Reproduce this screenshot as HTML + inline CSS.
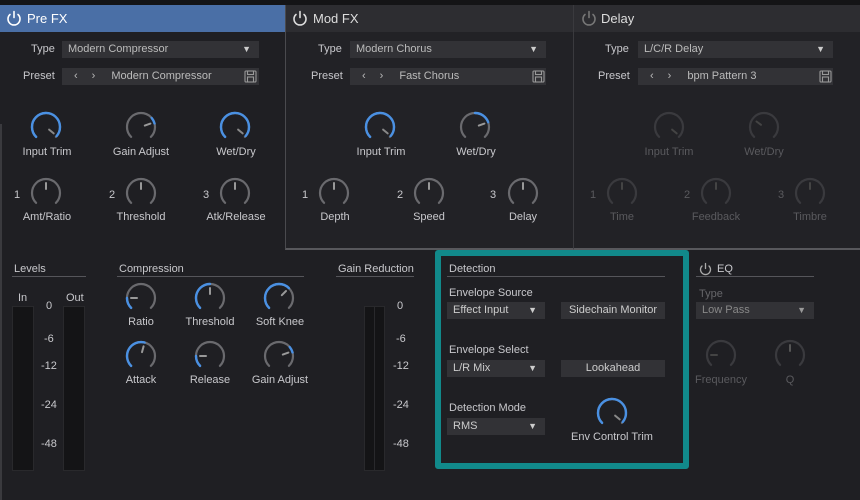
<!DOCTYPE html>
<html><head><meta charset="utf-8"><style>
*{margin:0;padding:0;box-sizing:border-box}
body{width:860px;height:500px;background:#1f1f23;position:relative;overflow:hidden;font-family:"Liberation Sans",sans-serif;font-size:11px;color:#c8c8cc}
.a{position:absolute;white-space:nowrap}
.hdr{position:absolute;top:5px;height:27px;font-size:13px;color:#ddd;padding-left:27px;line-height:27px}
.dd{position:absolute;height:17px;background:#323236;color:#bbb;line-height:17px;padding-left:6px;font-size:11px}
.dd .t{position:absolute;right:8px;top:0;font-size:9px;color:#ccc}
.lbl{position:absolute;text-align:center;width:100px;margin-left:-50px}
.sec{position:absolute;border-bottom:1px solid #55555a;height:14px;line-height:12px;padding-left:2px}
.dim{color:#5a5a5e}
.meter{position:absolute;background:#141416;border:1px solid #29292c}
.num{position:absolute;font-size:11px}
</style></head><body>
<div class="a" style="left:0;top:0;width:860px;height:5px;background:#141416"></div>
<div class="a" style="left:0;top:5px;width:285px;height:243px;background:#1f1f23"></div>
<div class="hdr" style="left:0;width:285px;background:#4a6fa6;color:#fff">Pre FX</div>
<div class="a" style="left:285px;top:5px;width:289px;height:245px;background:#222226;border:1px solid #4a4a4e;border-bottom:2px solid #58585c"></div>
<div class="hdr" style="left:286px;width:287px;background:#2d2d31">Mod FX</div>
<div class="a" style="left:573px;top:5px;width:287px;height:245px;background:#222226;border-left:1px solid #3a3a3e;border-bottom:2px solid #58585c"></div>
<div class="hdr" style="left:574px;width:286px;background:#2d2d31">Delay</div>
<div class="a" style="left:0;top:124px;width:2px;height:376px;background:#3a3a3e"></div>

<div class="a" style="left:31px;top:43px">Type</div>
<div class="dd" style="left:62px;top:41px;width:197px">Modern Compressor<span class="t">▼</span></div>
<div class="a" style="left:23px;top:70px">Preset</div>
<div class="dd" style="left:62px;top:68px;width:197px"><span style="margin-left:6px">‹</span><span style="margin-left:14px">›</span><span style="margin-left:16px">Modern Compressor</span></div>
<div class="lbl" style="left:47px;top:146px">Input Trim</div>
<div class="lbl" style="left:141px;top:146px">Gain Adjust</div>
<div class="lbl" style="left:236px;top:146px">Wet/Dry</div>
<div class="num" style="left:14px;top:189px">1</div>
<div class="num" style="left:109px;top:189px">2</div>
<div class="num" style="left:203px;top:189px">3</div>
<div class="lbl" style="left:47px;top:211px">Amt/Ratio</div>
<div class="lbl" style="left:141px;top:211px">Threshold</div>
<div class="lbl" style="left:236px;top:211px">Atk/Release</div>

<div class="a" style="left:318px;top:43px">Type</div>
<div class="dd" style="left:350px;top:41px;width:196px">Modern Chorus<span class="t">▼</span></div>
<div class="a" style="left:311px;top:70px">Preset</div>
<div class="dd" style="left:350px;top:68px;width:196px"><span style="margin-left:6px">‹</span><span style="margin-left:14px">›</span><span style="margin-left:16px">Fast Chorus</span></div>
<div class="lbl" style="left:381px;top:146px">Input Trim</div>
<div class="lbl" style="left:476px;top:146px">Wet/Dry</div>
<div class="num" style="left:302px;top:189px">1</div>
<div class="num" style="left:397px;top:189px">2</div>
<div class="num" style="left:490px;top:189px">3</div>
<div class="lbl" style="left:335px;top:211px">Depth</div>
<div class="lbl" style="left:429px;top:211px">Speed</div>
<div class="lbl" style="left:523px;top:211px">Delay</div>

<div class="a" style="left:605px;top:43px">Type</div>
<div class="dd" style="left:638px;top:41px;width:195px">L/C/R Delay<span class="t">▼</span></div>
<div class="a" style="left:598px;top:70px">Preset</div>
<div class="dd" style="left:638px;top:68px;width:195px"><span style="margin-left:6px">‹</span><span style="margin-left:14px">›</span><span style="margin-left:16px">bpm Pattern 3</span></div>
<div class="lbl dim" style="left:669px;top:146px">Input Trim</div>
<div class="lbl dim" style="left:764px;top:146px">Wet/Dry</div>
<div class="num dim" style="left:590px;top:189px">1</div>
<div class="num dim" style="left:684px;top:189px">2</div>
<div class="num dim" style="left:778px;top:189px">3</div>
<div class="lbl dim" style="left:622px;top:211px">Time</div>
<div class="lbl dim" style="left:716px;top:211px">Feedback</div>
<div class="lbl dim" style="left:810px;top:211px">Timbre</div>

<div class="sec" style="left:12px;top:263px;width:74px">Levels</div>
<div class="a" style="left:18px;top:292px">In</div>
<div class="a" style="left:66px;top:292px">Out</div>
<div class="meter" style="left:12px;top:306px;width:22px;height:165px"></div>
<div class="meter" style="left:63px;top:306px;width:22px;height:165px"></div>
<div class="num" style="left:46px;top:300px">0</div>
<div class="num" style="left:44px;top:333px">-6</div>
<div class="num" style="left:41px;top:360px">-12</div>
<div class="num" style="left:41px;top:399px">-24</div>
<div class="num" style="left:41px;top:438px">-48</div>

<div class="sec" style="left:117px;top:263px;width:187px">Compression</div>
<div class="lbl" style="left:141px;top:316px">Ratio</div>
<div class="lbl" style="left:210px;top:316px">Threshold</div>
<div class="lbl" style="left:280px;top:316px">Soft Knee</div>
<div class="lbl" style="left:141px;top:374px">Attack</div>
<div class="lbl" style="left:210px;top:374px">Release</div>
<div class="lbl" style="left:280px;top:374px">Gain Adjust</div>

<div class="sec" style="left:336px;top:263px;width:78px">Gain Reduction</div>
<div class="meter" style="left:364px;top:306px;width:11px;height:165px"></div>
<div class="meter" style="left:374px;top:306px;width:11px;height:165px"></div>
<div class="num" style="left:397px;top:300px">0</div>
<div class="num" style="left:396px;top:333px">-6</div>
<div class="num" style="left:393px;top:360px">-12</div>
<div class="num" style="left:393px;top:399px">-24</div>
<div class="num" style="left:393px;top:438px">-48</div>

<div class="a" style="left:435px;top:250px;width:254px;height:219px;border:6px solid #11898a;border-radius:3px;background:#1f1f23"></div>
<div class="sec" style="left:447px;top:263px;width:218px">Detection</div>
<div class="a" style="left:449px;top:287px">Envelope Source</div>
<div class="dd" style="left:447px;top:302px;width:98px;color:#ccc">Effect Input<span class="t">▼</span></div>
<div class="dd" style="left:561px;top:302px;width:104px;color:#ccc;padding:0;text-align:center">Sidechain Monitor</div>
<div class="a" style="left:449px;top:344px">Envelope Select</div>
<div class="dd" style="left:447px;top:360px;width:98px;color:#ccc">L/R Mix<span class="t">▼</span></div>
<div class="dd" style="left:561px;top:360px;width:104px;color:#ccc;padding:0;text-align:center">Lookahead</div>
<div class="a" style="left:449px;top:402px">Detection Mode</div>
<div class="dd" style="left:447px;top:418px;width:98px;color:#ccc">RMS<span class="t">▼</span></div>
<div class="lbl" style="left:612px;top:431px">Env Control Trim</div>

<div class="sec" style="left:696px;top:263px;width:118px;padding-left:21px">EQ</div>
<div class="a dim" style="left:699px;top:288px;color:#66666a">Type</div>
<div class="dd" style="left:696px;top:302px;width:118px;color:#888">Low Pass<span class="t" style="color:#999">▼</span></div>
<div class="lbl dim" style="left:721px;top:374px">Frequency</div>
<div class="lbl dim" style="left:790px;top:374px">Q</div>

<svg class="a" style="left:0;top:0" width="860" height="500" viewBox="0 0 860 500" fill="none" stroke-linecap="round">
<defs>
<path id="g" d="M-9.9 9.9A14 14 0 1 1 9.9 9.9" stroke="#6a6a6e" stroke-width="2.2"/>
<path id="gd" d="M-9.9 9.9A14 14 0 1 1 9.9 9.9" stroke="#3a3a3e" stroke-width="2.2"/>
<path id="full" d="M-9.9 9.9A14 14 0 1 1 10.7 9" stroke="#4a90e2" stroke-width="2.4"/>
</defs>
<g stroke-width="2">
<g stroke="#fff" stroke-width="1.6"><path d="M10 14.5A6 6 0 1 0 18 14.5"/><path d="M14 11.5v6"/></g>
<g stroke="#ddd" stroke-width="1.6"><path d="M296 14.5A6 6 0 1 0 304 14.5"/><path d="M300 11.5v6"/></g>
<g stroke="#777" stroke-width="1.6"><path d="M585 14.5A6 6 0 1 0 593 14.5"/><path d="M589 11.5v6"/></g>
<g stroke="#aaa" stroke-width="1.3"><path d="M702 266A5 5 0 1 0 709 266"/><path d="M705.5 263.5v5"/></g>
<g stroke="#999" stroke-width="1.1"><rect x="245" y="71" width="11" height="11" rx="1"/><rect x="247.5" y="71" width="6" height="3.5"/><rect x="247.5" y="77" width="6" height="5"/></g>
<g stroke="#999" stroke-width="1.1"><rect x="533" y="71" width="11" height="11" rx="1"/><rect x="535.5" y="71" width="6" height="3.5"/><rect x="535.5" y="77" width="6" height="5"/></g>
<g stroke="#999" stroke-width="1.1"><rect x="820" y="71" width="11" height="11" rx="1"/><rect x="822.5" y="71" width="6" height="3.5"/><rect x="822.5" y="77" width="6" height="5"/></g>
<g transform="translate(46,127)"><use href="#g"/><use href="#full"/><path d="M3.1 2.6L7.7 6.4" stroke="#888"/></g>
<g transform="translate(141,127)"><use href="#g"/><path d="M10.7 -9A14 14 0 0 1 13.5 -3.6" stroke="#4a90e2" stroke-width="2.4"/><path d="M3.8 -1.4L9.4 -3.4" stroke="#999"/></g>
<g transform="translate(235,127)"><use href="#g"/><use href="#full"/><path d="M3.1 2.6L7.7 6.4" stroke="#888"/></g>
<g transform="translate(46,193)"><use href="#g"/><path d="M0 -4V-10" stroke="#999"/></g>
<g transform="translate(141,193)"><use href="#g"/><path d="M0 -4V-10" stroke="#999"/></g>
<g transform="translate(235,193)"><use href="#g"/><path d="M0 -4V-10" stroke="#999"/></g>
<g transform="translate(380,127)"><use href="#g"/><use href="#full"/><path d="M3.1 2.6L7.7 6.4" stroke="#888"/></g>
<g transform="translate(475,127)"><use href="#g"/><path d="M0 -14A14 14 0 0 1 13.2 -4.8" stroke="#4a90e2" stroke-width="2.4"/><path d="M3.8 -1.4L9.4 -3.4" stroke="#999"/></g>
<g transform="translate(334,193)"><use href="#g"/><path d="M0 -4V-10" stroke="#999"/></g>
<g transform="translate(429,193)"><use href="#g"/><path d="M0 -4V-10" stroke="#999"/></g>
<g transform="translate(523,193)"><use href="#g"/><path d="M0 -4V-10" stroke="#999"/></g>
<g transform="translate(669,127)"><use href="#gd"/><path d="M3.1 2.6L7.7 6.4" stroke="#444"/></g>
<g transform="translate(764,127)"><use href="#gd"/><path d="M-3 -2.2L-7.5 -5.5" stroke="#444"/></g>
<g transform="translate(622,193)"><use href="#gd"/><path d="M0 -4V-10" stroke="#444"/></g>
<g transform="translate(716,193)"><use href="#gd"/><path d="M0 -4V-10" stroke="#444"/></g>
<g transform="translate(810,193)"><use href="#gd"/><path d="M0 -4V-10" stroke="#444"/></g>
<g transform="translate(141,298)"><use href="#g"/><path d="M-9.9 9.9A14 14 0 0 1 -14 0" stroke="#4a90e2" stroke-width="2.4"/><path d="M-4 0H-10" stroke="#999"/></g>
<g transform="translate(210,298)"><use href="#g"/><path d="M-9.9 9.9A14 14 0 0 1 0 -14" stroke="#4a90e2" stroke-width="2.4"/><path d="M0 -4V-10" stroke="#999"/></g>
<g transform="translate(279,298)"><use href="#g"/><path d="M-9.9 9.9A14 14 0 0 1 9.9 -9.9" stroke="#4a90e2" stroke-width="2.4"/><path d="M2.8 -2.8L7 -7" stroke="#999"/></g>
<g transform="translate(141,356)"><use href="#g"/><path d="M-9.9 9.9A14 14 0 0 1 3.6 -13.5" stroke="#4a90e2" stroke-width="2.4"/><path d="M1 -3.9L2.6 -9.7" stroke="#999"/></g>
<g transform="translate(210,356)"><use href="#g"/><path d="M-9.9 9.9A14 14 0 0 1 -14 0" stroke="#4a90e2" stroke-width="2.4"/><path d="M-4 0H-10" stroke="#999"/></g>
<g transform="translate(279,356)"><use href="#g"/><path d="M10.7 -9A14 14 0 0 1 13.5 -3.6" stroke="#4a90e2" stroke-width="2.4"/><path d="M3.8 -1.4L9.4 -3.4" stroke="#999"/></g>
<g transform="translate(612,413)"><use href="#g"/><use href="#full"/><path d="M3.1 2.6L7.7 6.4" stroke="#888"/></g>
<g transform="translate(721,355)"><use href="#gd"/><path d="M-4 0H-10" stroke="#444"/></g>
<g transform="translate(790,355)"><use href="#gd"/><path d="M0 -4V-10" stroke="#555"/></g>
</g>
</svg>
</body></html>
